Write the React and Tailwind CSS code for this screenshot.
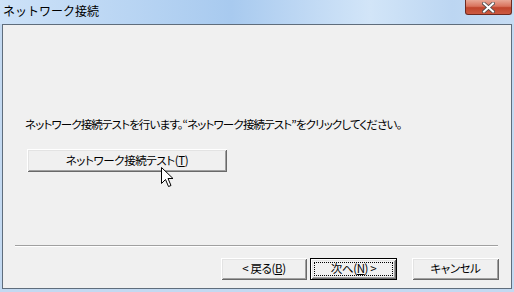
import React from "react";

const btn =
  "flex items-center justify-center bg-[#f0f0f0] text-[11.5px] tracking-[-0.4px] text-black leading-none shadow-[inset_1px_1px_0_#ffffff,inset_-1px_-1px_0_#696969,inset_2px_2px_0_#e3e3e3,inset_-2px_-2px_0_#a0a0a0]";

export default function App() {
  return (
    <div
      className="relative w-[514px] h-[292px] overflow-hidden flex flex-col bg-[#c3d9f1] [font-family:'Noto_Sans_CJK_JP',sans-serif]"
    >
      <div className="h-[24px] flex items-start justify-between bg-[linear-gradient(90deg,#cde2f8_0%,#b9d5f3_25%,#a8caef_45%,#c0d9f4_60%,#d2e5f8_72%,#bcd6f2_88%,#c6dcf3_100%)]">
        <div className="pl-[3px] pt-[3px] text-[12px] leading-[15px] text-black">ネットワーク接続</div>
        <div className="mr-[2px] w-[47px] h-[15px] rounded-b-[3px] border border-t-0 border-[#6e2a20] bg-[linear-gradient(180deg,#e9a896_0%,#d9735d_45%,#c0452c_55%,#cc5a42_100%)] flex items-center justify-center">
          <svg width="13" height="11" viewBox="0 0 13 11">
            <path d="M2 1.5 L11 9.5 M11 1.5 L2 9.5" stroke="#4a4a4a" strokeWidth="3.6" strokeLinecap="square" />
            <path d="M2 1.5 L11 9.5 M11 1.5 L2 9.5" stroke="#ffffff" strokeWidth="2" strokeLinecap="square" />
          </svg>
        </div>
      </div>

      <div className="mx-[2px] mb-[3px] flex-1 flex flex-col border border-[#5f6d7c] bg-[#f0f0f0] [font-feature-settings:'palt']">
        <div className="pl-[22px] pt-[91px] text-[11.5px] tracking-[-0.85px] leading-[16px] text-black whitespace-nowrap">
          ネットワーク接続テストを行います。“ネットワーク接続テスト”をクリックしてください。
        </div>
        <div className="pl-[24px] pt-[17px]">
          <div className={`${btn} w-[200px] h-[23px]`}>
            ネットワーク接続テスト(<span className="underline">T</span>)
          </div>
        </div>
        <div className="flex-1" />
        <div className="ml-[12px] mr-[13px] h-[2px] border-t border-[#a0a0a0] border-b border-b-white" />
        <div className="flex justify-end pr-[12px] pt-[11px] pb-[8px]">
          <div className={`${btn} w-[86px] h-[22px]`}>
            &lt; 戻る(<span className="underline">B</span>)
          </div>
          <div className="ml-[3px] w-[87px] h-[22px] border border-black">
            <div className={`${btn} w-full h-full p-[3px]`}>
              <div className="w-full h-full border border-dotted border-black flex items-center justify-center">
                次へ(<span className="underline">N</span>) &gt;
              </div>
            </div>
          </div>
          <div className={`${btn} ml-[15px] w-[87px] h-[22px]`}>キャンセル</div>
        </div>
      </div>

      <svg
        className="absolute left-[161px] top-[167px]"
        width="13"
        height="21"
        viewBox="0 0 13 21"
      >
        <path
          d="M0.5 0.5 L0.5 16.5 L4.5 12.5 L7.5 19.5 L10 18.5 L7 11.5 L12 11.5 Z"
          fill="#ffffff"
          stroke="#000000"
          strokeWidth="1"
          strokeLinejoin="miter"
        />
      </svg>
    </div>
  );
}
